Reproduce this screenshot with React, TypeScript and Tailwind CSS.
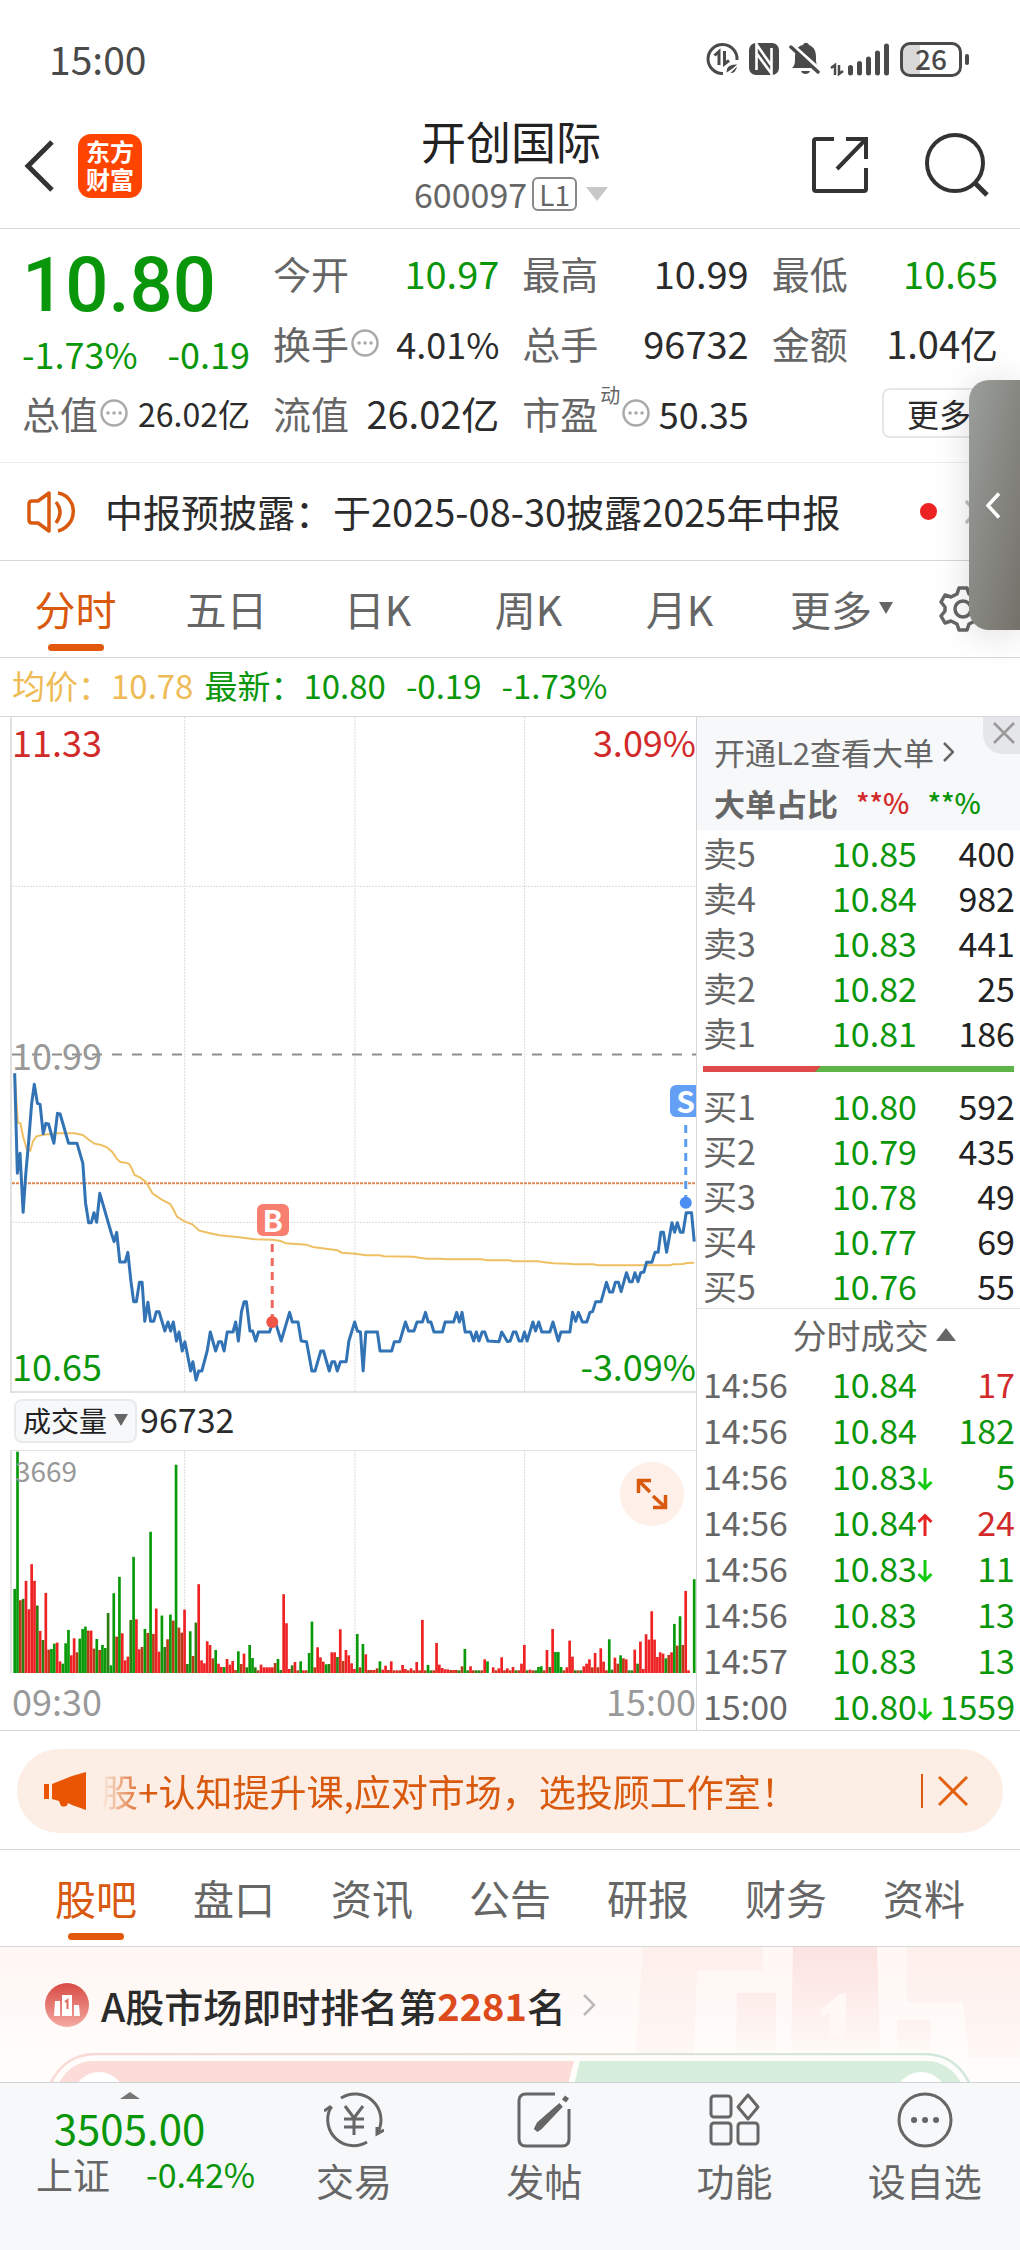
import type { ReactNode } from "react";

const GREEN = "text-[#0a960a]";
const RED = "text-[#d22a2a]";
const DARK = "text-[#2b2b2b]";

/* ---------- chart data ---------- */

// Price polyline, in chart units (x along the session, y downwards).
const PRICE =
  "31,100 37,400 43,340 50,517 56,400 62,310 69,192 75,133 82,190 88,193 95,281 101,250 107,252 119,310 127,220 133,222 152,310 171,310 184,370 190,488 197,548 203,548 209,518 215,547 222,460 248,580 254,605 260,577 267,666 279,666 285,637 292,725 298,785 304,785 311,727 317,727 323,844 330,787 336,844 343,844 349,815 355,815 368,873 375,846 381,873 387,846 394,903 400,876 407,933 413,905 426,993 431,965 438,1020 444,993 451,993 463,933 470,876 482,933 489,905 495,905 501,933 508,876 521,876 527,846 533,903 540,815 546,785 551,785 559,873 565,873 572,903 578,876 603,876 610,846 616,846 629,903 648,817 654,846 667,846 674,903 686,905 698,993 705,993 718,933 724,933 737,993 743,965 749,965 755,993 762,965 775,965 781,903 794,846 800,873 807,876 813,993 819,876 845,876 851,933 877,933 883,905 895,905 902,873 908,846 915,873 927,873 934,846 946,846 953,817 959,846 965,846 972,876 991,876 997,846 1016,846 1023,817 1029,846 1035,817 1042,876 1054,876 1061,903 1067,876 1073,903 1080,876 1086,876 1093,903 1118,905 1124,876 1137,905 1143,903 1150,876 1156,876 1163,903 1169,903 1175,876 1181,903 1194,846 1200,873 1207,846 1214,876 1232,876 1239,846 1251,903 1257,876 1277,876 1283,817 1290,844 1296,817 1305,846 1315,846 1322,817 1328,815 1335,785 1347,785 1359,727 1366,756 1373,756 1379,727 1386,727 1392,755 1404,698 1411,725 1417,725 1423,698 1430,725 1436,698 1443,696 1449,667 1461,667 1468,637 1475,637 1481,577 1487,577 1494,637 1506,548 1512,577 1518,548 1525,577 1531,577 1538,518 1550,518 1556,605";

const AVERAGE =
  "31,100 38,248 44,250 50,290 58,328 66,332 72,304 80,289 95,284 130,280 165,280 184,285 198,300 210,311 225,315 238,322 250,336 260,356 268,366 280,368 288,372 294,386 300,405 312,412 325,425 332,440 340,460 360,478 380,492 388,510 395,530 412,544 430,553 445,572 470,580 490,586 530,591 570,598 610,599 628,603 640,610 685,614 700,621 755,631 765,638 795,641 820,646 850,646 860,649 925,650 955,656 985,656 1000,658 1080,658 1090,661 1140,661 1150,664 1205,664 1220,667 1240,670 1275,671 1285,673 1330,673 1340,676 1500,676 1510,673 1530,672 1540,669 1556,668";

// One entry per minute: colour letter and bar height; "-" is a minute with no trade.
const VOLUME =
  "g252 g663 m218 d222 r276 r191 r326 r276 d202 r126 d99 r240 m70 g72 g88 r91 r35 g28 g89 g129 r53 r104 m62 g103 g132 g139 m127 r127 m73 g102 m69 g84 g75 d180 g23 g239 m109 g288 r119 r38 r49 d159 g348 r161 r71 m78 g132 m120 g423 m117 r193 r64 g172 d78 m101 g175 m157 g624 m136 m121 r190 d27 g125 m51 d151 r266 r38 r29 r95 r84 m44 g69 r28 r18 g18 r42 r25 r36 m9 g65 m27 r58 d17 g84 g45 d17 m8 r25 r17 r17 r17 r17 m30 g42 d9 r236 r149 r12 d23 r33 m8 g35 r8 m8 g60 g154 m17 r77 r47 r34 g26 d27 r62 r62 d48 r131 m36 r69 r53 r29 r12 g117 m17 g87 r56 m9 m9 r9 m14 g35 r10 r22 m9 r35 m8 r8 m8 r24 r12 m8 r14 m8 r33 m8 r159 m8 g24 d8 m8 r90 r25 r15 r11 r11 m9 r9 m9 d8 m20 g72 d8 r20 m8 d8 d8 m8 r41 g35 - r17 m8 r14 r47 m8 r14 m8 r18 d8 m8 r28 r84 d8 r10 m8 d8 g18 g20 m8 r69 d18 r132 g63 g63 g18 m8 r17 r97 r49 d8 m8 d8 r20 r28 r41 m17 r60 m17 r74 r34 m8 g101 d10 r46 m28 g53 m44 r41 d8 d8 r70 d28 r94 r12 r116 r100 r185 r100 r48 r62 r58 g44 m54 r62 g147 m82 g170 m84 r246 r8 - g281";

const BAR_COLOURS: Record<string, string> = {
  g: "#089a08",
  d: "#2f7d12",
  r: "#ee2222",
  m: "#b93a17",
};

const bars = VOLUME.split(" ").map((s, i) => ({
  x: 28 + i * 6.354,
  h: Number(s.slice(1)) || 0,
  fill: BAR_COLOURS[s[0]] ?? "none",
}));

/* ---------- status bar ---------- */

function StatusBar() {
  return (
    <div className="flex items-center justify-between pt-[39px] pr-[51px] pb-[31px] pl-[49px] text-[#4a4a4a]">
      <span className="pb-[2px] text-[39px] leading-[38px]">15:00</span>
      <div className="flex items-center">
        <svg width="34" height="34" viewBox="0 0 34 34" fill="none" stroke="currentColor" strokeWidth="3">
          <path d="M31 18A14.5 14.5 0 1 0 17 31.500" />
          <path d="M8.500 13.500L13 9.500V23M18.500 9V22L23 18.500" strokeWidth="3" />
          <path d="M20 31c-1-7 5-10 12-9 0 7-4 11-9 9.500l8-8" fill="currentColor" stroke="#fff" strokeWidth="1.500" />
        </svg>
        <svg className="ml-[9px]" width="30" height="32" viewBox="0 0 30 32">
          <rect width="30" height="32" rx="7" fill="currentColor" />
          <path d="M7.500 0V27M22.500 5V32M8 2L22 22M8 11L22 30" stroke="#fff" strokeWidth="2.600" fill="none" />
        </svg>
        <svg className="ml-[10px]" width="32" height="34" viewBox="0 0 32 34">
          <path d="M3 26c3-3 3-5 3-10C6 9 8 4 14 3c1-3 5-3 6 0 5 2 7 6 7 12 0 5 0 8 3 11z" fill="currentColor" />
          <path d="M12 29h9c-1 4-8 4-9 0z" fill="currentColor" />
          <path d="M3 3L32 29" stroke="#fff" strokeWidth="4" />
          <path d="M2 5L29 30" stroke="currentColor" strokeWidth="3.500" strokeLinecap="round" />
        </svg>
        <svg className="ml-[9px]" width="60" height="34" viewBox="0 0 60 34" stroke="currentColor" fill="none">
          <path d="M1 26l4-3v10M9 23v9l4-3" strokeWidth="2.500" />
          <path d="M20.500 25.500V31M29.500 21.500V31M38.500 17V31M47.500 11V31M56.500 4V31" strokeWidth="5" strokeLinecap="round" />
        </svg>
        <div className="ml-[10px] flex items-center gap-[3px]">
          <span className="flex h-[35px] w-[62px] items-center justify-center rounded-[10px] border-[3px] border-current bg-linear-to-r from-[#d9d9d9] from-30% to-white to-30% pb-[2px] text-[28px] leading-none font-medium">
            26
          </span>
          <span className="h-[11px] w-[4px] rounded-full bg-current" />
        </div>
      </div>
    </div>
  );
}

/* ---------- header ---------- */

function Header() {
  return (
    <header className="flex items-center justify-between border-b border-[#d6d6d6] pr-[30px] pb-[13px] pl-[24px]">
      <div className="flex w-[278px] items-center gap-[23px] pt-[6px]">
        <button type="button" aria-label="返回">
          <svg width="31" height="52" viewBox="0 0 31 52" fill="none" stroke="#333" strokeWidth="5">
            <path d="M28 2L4 26L28 50" />
          </svg>
        </button>
        <span className="flex h-[64px] w-[64px] flex-col items-center justify-center rounded-[13px] bg-[#ff4400] pb-[2px] text-[24px] leading-[28px] font-bold text-white">
          <span>东方</span>
          <span>财富</span>
        </span>
      </div>
      <div className="flex flex-col items-center">
        <h1 className="text-[45px] leading-[62px] text-[#222]">开创国际</h1>
        <button type="button" className="flex items-center gap-[5px] text-[#666]">
          <span className="text-[34px] leading-[43px]">600097</span>
          <span className="rounded-[6px] border-2 border-[#888] px-[5px] text-[28px] leading-[30px]">L1</span>
          <svg className="ml-[4px]" width="22" height="14" viewBox="0 0 22 14">
            <path d="M0 0H22L11 14z" fill="#c8c8c8" />
          </svg>
        </button>
      </div>
      <div className="flex w-[270px] items-center justify-end gap-[54px] pt-[4px]">
        <button type="button" aria-label="分享">
          <svg width="60" height="60" viewBox="0 0 60 60" fill="none" stroke="#333" strokeWidth="4">
            <path d="M24 4H6Q4 4 4 6V54Q4 56 6 56H54Q56 56 56 54V33" />
            <path d="M36 4H56V24M56 4L27 34" />
          </svg>
        </button>
        <button type="button" aria-label="搜索">
          <svg width="66" height="66" viewBox="0 0 66 66" fill="none" stroke="#333" strokeWidth="4">
            <circle cx="31" cy="31" r="28" />
            <path d="M51 51L63 63" strokeWidth="5" />
          </svg>
        </button>
      </div>
    </header>
  );
}

/* ---------- quote grid ---------- */

function Info() {
  return (
    <svg width="28" height="28" viewBox="0 0 28 28" fill="none" stroke="#aaa" strokeWidth="2.500">
      <circle cx="14" cy="14" r="12.500" />
      <path d="M8 14h.1M14 14h.1M20 14h.1" strokeWidth="3.500" strokeLinecap="round" />
    </svg>
  );
}

function Cell({ label, value, tone = DARK, info, size = "", sup }: { label: string; value: string; tone?: string; info?: boolean; size?: string; sup?: string }) {
  return (
    <div className="flex items-center justify-between whitespace-nowrap">
      <dt className="flex items-center gap-[2px] text-[#666]">
        {label}
        {sup && <sup className="-top-[18px] text-[20px] leading-none">{sup}</sup>}
        {info && <Info />}
      </dt>
      <dd className={`${tone} ${size}`}>{value}</dd>
    </div>
  );
}

function Quote() {
  return (
    <section className="grid grid-cols-[228px_1fr_1fr_1fr] gap-x-[23px] border-b border-[#ececec] px-[22px] pt-[9px] pb-[14px] text-[38px] leading-[70px]">
      <div className="row-span-2 flex flex-col">
        <strong className={`pt-[4px] font-['Roboto'] text-[76px] leading-[86px] font-medium ${GREEN}`}>10.80</strong>
        <div className={`flex justify-between text-[36px] leading-[50px] ${GREEN}`}>
          <span>-1.73%</span>
          <span>-0.19</span>
        </div>
      </div>
      <Cell label="今开" value="10.97" tone={GREEN} />
      <Cell label="最高" value="10.99" />
      <Cell label="最低" value="10.65" tone={GREEN} />
      <Cell label="换手" value="4.01%" info size="text-[36px]" />
      <Cell label="总手" value="96732" />
      <Cell label="金额" value="1.04亿" />
      <Cell label="总值" value="26.02亿" info size="text-[32px]" />
      <Cell label="流值" value="26.02亿" />
      <Cell label="市盈" value="50.35" info sup="动" size="text-[36px]" />
      <div className="flex items-center justify-end">
        <button type="button" className={`w-[116px] rounded-[8px] border-2 border-[#e6e6e6] pl-[23px] text-left text-[32px] leading-[46px] ${DARK}`}>
          更多
        </button>
      </div>
    </section>
  );
}

function Notice() {
  return (
    <a href="#notice" className="flex items-center border-b border-[#d6d6d6] pr-[44px] pl-[27px] leading-[95px]">
      <svg width="50" height="44" viewBox="0 0 50 44" fill="none" stroke="#d9590f" strokeWidth="3.500">
        <path d="M22 3L11 11H5Q2 11 2 14V30Q2 33 5 33H11L22 41z" strokeLinejoin="round" />
        <path d="M29 12q8 10 0 21M31 3q9 1 14 11 3 9-1 17-5 8-13 10" />
      </svg>
      <span className="ml-[28px] flex-1 pb-[2px] text-[38px] whitespace-nowrap text-[#2b2b2b]">
        中报预披露：于2025-08-30披露2025年中报
      </span>
      <span className="h-[17px] w-[17px] rounded-full bg-[#ee2222]" />
      <svg className="ml-[28px]" width="11" height="24" viewBox="0 0 11 24" fill="none" stroke="#bbb" strokeWidth="3">
        <path d="M1 1L10 12L1 23" />
      </svg>
    </a>
  );
}

function PeriodTabs() {
  const tabs = ["分时", "五日", "日K", "周K", "月K"];
  return (
    <nav className="flex items-center border-b border-[#d6d6d6] text-[41px] text-[#666]">
      {tabs.map((t, i) => (
        <button
          key={t}
          type="button"
          className={i === 0 ? "relative flex-1 pb-[2px] leading-[94px] text-[#d9590f]" : "relative flex-1 pb-[2px] leading-[94px]"}
        >
          {t}
          {i === 0 && <span className="absolute bottom-[6px] left-1/2 h-[7px] w-[56px] -translate-x-1/2 rounded-full bg-[#e2580c]" />}
        </button>
      ))}
      <button type="button" className="flex flex-1 items-center justify-end gap-[7px] pb-[2px] leading-[94px]">
        更多
        <svg className="mr-[13px]" width="14" height="12" viewBox="0 0 14 12">
          <path d="M0 0H14L7 12z" fill="#666" />
        </svg>
      </button>
      <button type="button" aria-label="设置" className="w-[114px] pl-[33px]">
        <svg width="48" height="48" viewBox="0 0 48 48" fill="none" stroke="#666" strokeWidth="3.500" strokeLinejoin="round">
          <path d="M20 3H28L30 9L36 12L42 10L46 17L42 22V26L46 31L42 38L36 36L30 39L28 45H20L18 39L12 36L6 38L2 31L6 26V22L2 17L6 10L12 12L18 9z" />
          <circle cx="24" cy="24" r="8" />
        </svg>
      </button>
    </nav>
  );
}

/* ---------- charts ---------- */

function PriceChart() {
  return (
    <div className="relative">
      <svg
        className="block h-[674px] w-full"
        viewBox="25 -969 1535 2022"
        preserveAspectRatio="none"
        fill="none"
        role="img"
        aria-label="分时走势"
      >
        <g stroke="#dcdcdc" strokeDasharray="2 1">
          <path vectorEffect="non-scaling-stroke" d="M412.500 -969V1053" />
          <path vectorEffect="non-scaling-stroke" d="M794.500 -969V1053" />
          <path vectorEffect="non-scaling-stroke" d="M1175.500 -969V1053" />
          <path vectorEffect="non-scaling-stroke" d="M25 -461H1560" />
          <path vectorEffect="non-scaling-stroke" d="M25 547H1560" />
        </g>
        <path vectorEffect="non-scaling-stroke" d="M25 43.500H1560" stroke="#8e8e8e" strokeWidth="2" strokeDasharray="10 10" />
        <path vectorEffect="non-scaling-stroke" d="M25 430H1560" stroke="#dc8a55" strokeWidth="2" strokeDasharray="3 1" />
        <polyline vectorEffect="non-scaling-stroke" points={AVERAGE} stroke="#efc062" strokeWidth="2" />
        <polyline vectorEffect="non-scaling-stroke" points={PRICE} stroke="#3273b5" strokeWidth="3" strokeLinejoin="round" />
        <path vectorEffect="non-scaling-stroke" d="M609 612V846" stroke="#ee6a5e" strokeWidth="3" strokeDasharray="8 6" />
        <path vectorEffect="non-scaling-stroke" d="M609 846h.1" stroke="#ee5548" strokeWidth="12" strokeLinecap="round" />
        <path vectorEffect="non-scaling-stroke" d="M1537 255V488" stroke="#5b9bee" strokeWidth="3" strokeDasharray="8 6" />
        <path vectorEffect="non-scaling-stroke" d="M1537 488h.1" stroke="#4b8df0" strokeWidth="12" strokeLinecap="round" />
      </svg>
      <div className="absolute inset-0 text-[36px] leading-[40px]">
        <span className={`absolute top-[4px] left-0 ${RED}`}>11.33</span>
        <span className={`absolute top-[4px] right-0 ${RED}`}>3.09%</span>
        <span className="absolute top-1/2 left-0 -translate-y-1/2 text-[#999]">10.99</span>
        <span className={`absolute bottom-[6px] left-0 ${GREEN}`}>10.65</span>
        <span className={`absolute right-0 bottom-[6px] ${GREEN}`}>-3.09%</span>
        <span className="absolute top-[72.3%] left-[38.1%] h-[32px] w-[32px] -translate-x-1/2 rounded-[6px] bg-[#f77f70] text-center text-[30px] leading-[31px] font-bold text-white">
          B
        </span>
        <span className="absolute top-[54.6%] right-0 h-[32px] w-[26px] rounded-l-[6px] bg-[#639ff5] pr-px text-right text-[30px] leading-[31px] font-bold text-white">
          S
        </span>
      </div>
    </div>
  );
}

function VolumeChart() {
  return (
    <div className="relative">
      <svg
        className="block h-[222px] w-full"
        viewBox="25 181 1535 665"
        preserveAspectRatio="none"
        role="img"
        aria-label="成交量"
      >
        <g stroke="#dcdcdc" strokeDasharray="2 1">
          <path vectorEffect="non-scaling-stroke" d="M412.500 181V846" />
          <path vectorEffect="non-scaling-stroke" d="M794.500 181V846" />
          <path vectorEffect="non-scaling-stroke" d="M1175.500 181V846" />
        </g>
        {bars.map((b, i) => (
          <rect key={i} x={b.x} y={846 - b.h} width="6" height={b.h} fill={b.fill} />
        ))}
      </svg>
      <span className="absolute top-[4px] left-[3px] text-[28px] leading-[30px] text-[#999]">3669</span>
      <button
        type="button"
        aria-label="全屏"
        className="absolute top-[11px] right-[12px] flex h-[64px] w-[64px] items-center justify-center rounded-full bg-[#fef0e8]"
      >
        <svg width="34" height="34" viewBox="0 0 34 34" fill="none" stroke="#d9590f" strokeWidth="3.500">
          <path d="M3.500 16V3.500H16M4 4L15 15M18 19L30 30M30.500 18V30.500H18" />
        </svg>
      </button>
    </div>
  );
}

function ChartColumn() {
  return (
    <div className="min-w-0 flex-1 pl-[10px]">
      <div className="border-b-2 border-l-2 border-[#e2e2e2]">
        <PriceChart />
      </div>
      <div className="flex items-center gap-[3px] border-l-2 border-transparent pt-[6px] pb-[7px] pl-[2px]">
        <button
          type="button"
          className="flex items-center gap-[7px] rounded-[8px] border-2 border-[#e9eaed] bg-[#f7f8fa] px-[7px] pb-[2px] text-[28px] leading-[38px] text-[#222]"
        >
          成交量
          <svg width="14" height="12" viewBox="0 0 14 12">
            <path d="M0 0H14L7 12z" fill="#666" />
          </svg>
        </button>
        <span className={`pb-[4px] text-[34px] leading-[38px] ${DARK}`}>96732</span>
      </div>
      <div className="border-t border-l-2 border-[#e2e2e2]">
        <VolumeChart />
      </div>
      <div className="flex justify-between pt-[7px] pl-[2px] text-[36px] leading-[40px] text-[#999]">
        <span>09:30</span>
        <span>15:00</span>
      </div>
    </div>
  );
}

/* ---------- order book ---------- */

const sells = [
  ["卖5", "10.85", "400"],
  ["卖4", "10.84", "982"],
  ["卖3", "10.83", "441"],
  ["卖2", "10.82", "25"],
  ["卖1", "10.81", "186"],
];
const buys = [
  ["买1", "10.80", "592"],
  ["买2", "10.79", "435"],
  ["买3", "10.78", "49"],
  ["买4", "10.77", "69"],
  ["买5", "10.76", "55"],
];
const trades: { time: string; price: string; qty: string; dir?: "up" | "down"; up?: boolean }[] = [
  { time: "14:56", price: "10.84", qty: "17", up: true },
  { time: "14:56", price: "10.84", qty: "182" },
  { time: "14:56", price: "10.83", qty: "5", dir: "down" },
  { time: "14:56", price: "10.84", qty: "24", dir: "up", up: true },
  { time: "14:56", price: "10.83", qty: "11", dir: "down" },
  { time: "14:56", price: "10.83", qty: "13" },
  { time: "14:57", price: "10.83", qty: "13" },
  { time: "15:00", price: "10.80", qty: "1559", dir: "down" },
];

function BookTable({ rows }: { rows: string[][] }) {
  return (
    <table className="w-full table-fixed text-[34px] leading-[45px]">
      <tbody>
        {rows.map(([label, price, qty]) => (
          <tr key={label}>
            <th scope="row" className="w-[135px] pl-[6px] text-left font-normal text-[#666]">{label}</th>
            <td className={GREEN}>{price}</td>
            <td className="w-[90px] pr-[5px] text-right text-[#222]">{qty}</td>
          </tr>
        ))}
      </tbody>
    </table>
  );
}

function Arrow({ dir }: { dir: "up" | "down" }) {
  return (
    <svg
      className={dir === "up" ? "mb-[4px] inline-block" : "mb-[4px] inline-block rotate-180"}
      width="16"
      height="24"
      viewBox="0 0 16 24"
      fill="none"
      stroke={dir === "up" ? "#e62222" : "#12cc12"}
      strokeWidth="3"
      aria-label={dir === "up" ? "涨" : "跌"}
    >
      <path d="M8 23V3M1.500 9L8 2.500L14.500 9" />
    </svg>
  );
}

function OrderBook() {
  return (
    <aside className="w-[324px] border-l border-[#d6d6d6]">
      <div className="relative bg-[#f7f8fa] pt-[9px] pb-[2px] pl-[17px]">
        <a href="#l2" className="flex items-center gap-[9px] text-[31px] leading-[51px] whitespace-nowrap text-[#666]">
          开通L2查看大单
          <svg width="11" height="20" viewBox="0 0 11 20" fill="none" stroke="#666" strokeWidth="2.500">
            <path d="M1 1L10 10L1 19" />
          </svg>
        </a>
        <div className="flex gap-[18px] text-[31px] leading-[51px] font-bold text-[#666]">
          大单占比
          <span className={`text-[28px] font-medium ${RED}`}>**%</span>
          <span className={`text-[28px] font-medium ${GREEN}`}>**%</span>
        </div>
        <button
          type="button"
          aria-label="关闭"
          className="absolute top-0 right-0 flex h-[37px] w-[37px] items-center justify-center rounded-bl-[20px] bg-[#e5e6e9] pb-[6px] pl-[4px]"
        >
          <svg width="22" height="22" viewBox="0 0 22 22" stroke="#999" strokeWidth="2.500">
            <path d="M1 1L21 21M21 1L1 21" />
          </svg>
        </button>
      </div>
      <BookTable rows={sells} />
      <div className="px-[6px] py-[11px]">
        <svg className="block h-[6px] w-full" viewBox="0 0 311 6" preserveAspectRatio="none">
          <path d="M0 0H311V6H0z" fill="#5cb544" />
          <path d="M0 0H118L112 6H0z" fill="#df4b4b" />
        </svg>
      </div>
      <BookTable rows={buys} />
      <button
        type="button"
        className="flex w-full items-center justify-center gap-[7px] border-t border-[#e4e4e4] pb-[1px] pl-[31px] text-[34px] leading-[51px] text-[#666]"
      >
        分时成交
        <svg width="20" height="13" viewBox="0 0 20 13">
          <path d="M0 13H20L10 0z" fill="#666" />
        </svg>
      </button>
      <table className="mb-[1px] w-full table-fixed text-[34px] leading-[46px]">
        <tbody>
          {trades.map((t, i) => (
            <tr key={i}>
              <td className="w-[135px] pl-[6px] text-[#666]">{t.time}</td>
              <td className={`whitespace-nowrap ${GREEN}`}>
                {t.price}
                {t.dir && <Arrow dir={t.dir} />}
              </td>
              <td className={`w-[90px] pr-[5px] text-right ${t.up ? RED : GREEN}`}>{t.qty}</td>
            </tr>
          ))}
        </tbody>
      </table>
    </aside>
  );
}

/* ---------- lower page ---------- */

function Banner() {
  return (
    <div className="border-t border-b border-[#d6d6d6] px-[17px] pt-[18px] pb-[16px]">
      <div className="flex items-center rounded-full bg-[#fceee5] pr-[34px] pl-[27px] text-[37px] leading-[84px] text-[#d9590f]">
        <svg width="44" height="38" viewBox="0 0 44 38" fill="#ea5504">
          <path d="M0 12H5V27H0zM8 12L28 4L42 0V38L28 33L24 31Q23 36 17 34L15 29L8 27z" />
        </svg>
        <span className="ml-[13px] flex-1 [mask-image:linear-gradient(90deg,transparent,black_45px)] whitespace-nowrap">
          股+认知提升课,应对市场，选投顾工作室！
        </span>
        <span className="h-[34px] w-[2px] bg-[#d9590f]" />
        <button type="button" aria-label="关闭公告" className="ml-[14px]">
          <svg width="32" height="32" viewBox="0 0 32 32" stroke="#e2600f" strokeWidth="3">
            <path d="M2 2L30 30M30 2L2 30" />
          </svg>
        </button>
      </div>
    </div>
  );
}

function SectionTabs() {
  const tabs = ["股吧", "盘口", "资讯", "公告", "研报", "财务", "资料"];
  return (
    <nav className="flex border-b border-[#d6d6d6] px-[27px] text-[41px] leading-[94px] text-[#666]">
      {tabs.map((t, i) => (
        <button key={t} type="button" className={i === 0 ? "relative flex-1 pb-[2px] text-[#d9590f]" : "relative flex-1 pb-[2px]"}>
          {t}
          {i === 0 && <span className="absolute bottom-[6px] left-1/2 h-[7px] w-[56px] -translate-x-1/2 rounded-full bg-[#e2580c]" />}
        </button>
      ))}
    </nav>
  );
}

function Rank() {
  return (
    <section className="relative h-[135px] overflow-hidden bg-linear-to-b from-[#fff7f4] to-[#fffdfb]">
      <svg className="absolute top-0 right-0" width="390" height="135" viewBox="630 0 390 135">
        <defs>
          <linearGradient id="fade" x1="0" y1="0" x2="0" y2="1">
            <stop offset="0" stopColor="#fbe3e1" />
            <stop offset="1" stopColor="#fbe3e1" stopOpacity="0.100" />
          </linearGradient>
          <linearGradient id="pale" x1="0" y1="0" x2="0" y2="1">
            <stop offset="0" stopColor="#fdefec" />
            <stop offset="1" stopColor="#fdefec" stopOpacity="0.300" />
          </linearGradient>
        </defs>
        <path d="M643 0H763V24H697L694 111H635zM907 0H1020V111H969L963 55H907z" fill="url(#pale)" />
        <path d="M737 46H776V103H736zM793 0H877L880 103H791zM897 73H931V103H897z" fill="url(#fade)" />
        <path d="M821 62L840 47H846V90H830V66L821 70z" fill="#fff8f5" />
      </svg>
      <a href="#rank" className="relative flex items-center pt-[30px] pl-[45px] text-[39px] leading-[56px] font-bold text-[#2b2b2b]">
        <svg width="44" height="44" viewBox="0 0 44 44">
          <defs>
            <linearGradient id="badge" x1="0" y1="0" x2="0" y2="1">
              <stop offset="0" stopColor="#d94a44" />
              <stop offset="1" stopColor="#f3aaa2" />
            </linearGradient>
          </defs>
          <circle cx="22" cy="22" r="22" fill="url(#badge)" />
          <path d="M10 18H15V33H9zM17 12H27V33H17zM29 22H34L35 33H29z" fill="#fff" />
          <path d="M20 19L22.500 17V26" stroke="#e06a62" strokeWidth="2" fill="none" />
        </svg>
        <span className="ml-[12px] font-medium">A股市场即时排名第</span>
        <span className="text-[38px] text-[#dd4a1c]">2281</span>
        <span className="font-medium">名</span>
        <svg className="ml-[17px]" width="13" height="22" viewBox="0 0 13 22" fill="none" stroke="#bbb" strokeWidth="2.500">
          <path d="M1 1L11 11L1 21" />
        </svg>
      </a>
      <svg className="relative mx-auto mt-[20px] block" width="920" height="29" viewBox="50 106 920 29">
        <defs>
          <linearGradient id="rim" x1="0" x2="1">
            <stop offset="0" stopColor="#fbd9d5" />
            <stop offset="1" stopColor="#cfe9d8" />
          </linearGradient>
        </defs>
        <path d="M48 142Q62 107 96 107H924Q958 107 972 142" fill="#fffdfc" stroke="url(#rim)" strokeWidth="2.500" />
        <path d="M56 142Q68 114 94 114H574L567 142z" fill="#fcdcd9" />
        <path d="M573 142L580 114H926Q952 114 964 142z" fill="#d7eedd" />
        <circle cx="99" cy="151" r="26" fill="#fff" />
        <circle cx="921" cy="151" r="26" fill="#fff" />
      </svg>
    </section>
  );
}

function NavItem({ label, children }: { label: string; children: ReactNode }) {
  return (
    <button type="button" className="flex flex-1 flex-col items-center pt-[8px] text-[38px] leading-[54px] text-[#666]">
      <svg className="mb-[4px]" width="60" height="58" viewBox="-30 -29 60 58" fill="none" stroke="#666" strokeWidth="3">
        {children}
      </svg>
      {label}
    </button>
  );
}

function BottomNav() {
  return (
    <nav className="flex flex-1 border-t border-[#d0d3d6] bg-[#f7f8fa]">
      <button type="button" className="flex w-[259px] flex-col items-center pt-[9px]">
        <svg width="20" height="7" viewBox="0 0 20 7">
          <path d="M0 7H20L10 0z" fill="#777" />
        </svg>
        <span className={`mt-[4px] text-[42px] leading-[48px] ${GREEN}`}>3505.00</span>
        <span className="ml-[32px] flex items-center gap-[36px] text-[34px] leading-[46px]">
          <span className="text-[37px] text-[#666]">上证</span>
          <span className={GREEN}>-0.42%</span>
        </span>
      </button>
      <NavItem label="交易">
        <path d="M-13 -22A26 26 0 0 1 24 12M13 22A26 26 0 0 1 -24 -11" />
        <path d="M-30 -9L-24 -13L-22 -11M30 10L23 14V7" />
        <path d="M-9 -14L0 -2L9 -14M0 -2V15M-10 -1H10M-10 7H10" />
      </NavItem>
      <NavItem label="发帖">
        <path d="M11 -26H-18Q-25 -26 -25 -19V19Q-25 26 -18 26H18Q25 26 25 19V-11" />
        <path d="M23 -23L20 -19M17 -15L-4 7L-8 10L-5 4z" strokeWidth="5" />
      </NavItem>
      <NavItem label="功能">
        <rect x="-24" y="-24" width="20" height="21" rx="3" />
        <rect x="-24" y="3" width="20" height="21" rx="3" />
        <rect x="3" y="3" width="20" height="21" rx="3" />
        <path d="M13 -25L23 -13L13 -1L3 -13z" strokeLinejoin="round" />
      </NavItem>
      <NavItem label="设自选">
        <circle r="26" />
        <path d="M-11 0h.1M0 0h.1M11 0h.1" strokeWidth="6" strokeLinecap="round" />
      </NavItem>
    </nav>
  );
}

export default function App() {
  return (
    <div className="relative flex min-h-screen flex-col overflow-hidden bg-white font-['Noto_Sans_CJK_SC',sans-serif]">
      <StatusBar />
      <Header />
      <Quote />
      <Notice />
      <PeriodTabs />
      <div className="flex border-b border-[#d6d6d6] pb-[3px] pl-[12px] text-[33px] leading-[55px]">
        <span className="text-[#eebb55]">均价：10.78</span>
        <span className={`ml-[11px] ${GREEN}`}>最新：10.80</span>
        <span className={`ml-[20px] ${GREEN}`}>-0.19</span>
        <span className={`ml-[20px] ${GREEN}`}>-1.73%</span>
      </div>
      <div className="flex">
        <ChartColumn />
        <OrderBook />
      </div>
      <Banner />
      <SectionTabs />
      <Rank />
      <BottomNav />
      <button
        type="button"
        aria-label="展开侧栏"
        className="absolute top-[380px] right-0 flex h-[250px] w-[51px] items-center justify-center rounded-l-[20px] bg-linear-to-br from-[#9b9f9b] to-[#74716a] pr-[4px] shadow-[0_4px_36px_rgba(0,0,0,0.14)]"
      >
        <svg width="16" height="27" viewBox="0 0 16 27" fill="none" stroke="#fff" strokeWidth="3.500">
          <path d="M14 1.500L3 13.500L14 25.500" />
        </svg>
      </button>
    </div>
  );
}
